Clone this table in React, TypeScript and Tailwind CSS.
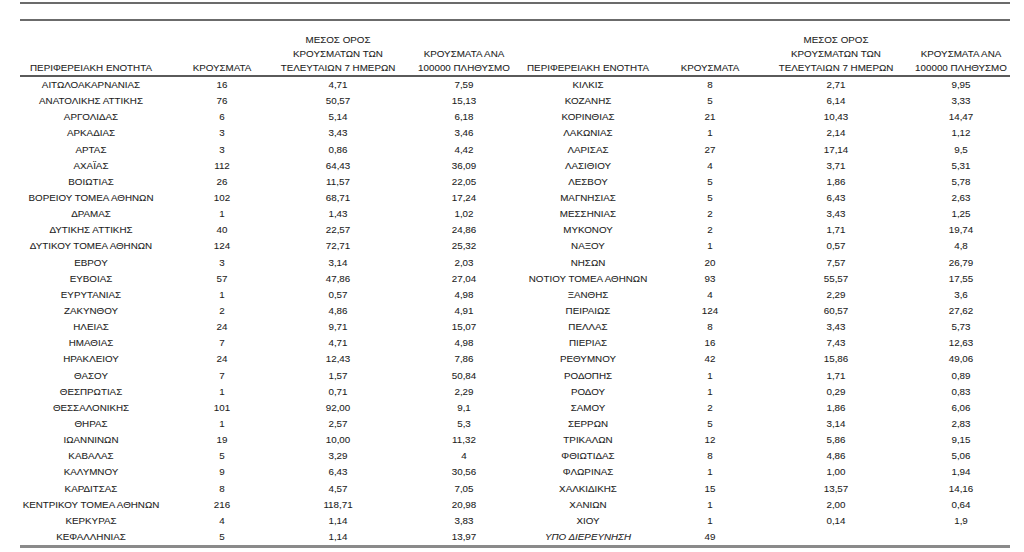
import React from "react";

type Row = [string, string, string, string];

const left: Row[] = [
  ["ΑΙΤΩΛΟΑΚΑΡΝΑΝΙΑΣ", "16", "4,71", "7,59"],
  ["ΑΝΑΤΟΛΙΚΗΣ ΑΤΤΙΚΗΣ", "76", "50,57", "15,13"],
  ["ΑΡΓΟΛΙΔΑΣ", "6", "5,14", "6,18"],
  ["ΑΡΚΑΔΙΑΣ", "3", "3,43", "3,46"],
  ["ΑΡΤΑΣ", "3", "0,86", "4,42"],
  ["ΑΧΑΪΑΣ", "112", "64,43", "36,09"],
  ["ΒΟΙΩΤΙΑΣ", "26", "11,57", "22,05"],
  ["ΒΟΡΕΙΟΥ ΤΟΜΕΑ ΑΘΗΝΩΝ", "102", "68,71", "17,24"],
  ["ΔΡΑΜΑΣ", "1", "1,43", "1,02"],
  ["ΔΥΤΙΚΗΣ ΑΤΤΙΚΗΣ", "40", "22,57", "24,86"],
  ["ΔΥΤΙΚΟΥ ΤΟΜΕΑ ΑΘΗΝΩΝ", "124", "72,71", "25,32"],
  ["ΕΒΡΟΥ", "3", "3,14", "2,03"],
  ["ΕΥΒΟΙΑΣ", "57", "47,86", "27,04"],
  ["ΕΥΡΥΤΑΝΙΑΣ", "1", "0,57", "4,98"],
  ["ΖΑΚΥΝΘΟΥ", "2", "4,86", "4,91"],
  ["ΗΛΕΙΑΣ", "24", "9,71", "15,07"],
  ["ΗΜΑΘΙΑΣ", "7", "4,71", "4,98"],
  ["ΗΡΑΚΛΕΙΟΥ", "24", "12,43", "7,86"],
  ["ΘΑΣΟΥ", "7", "1,57", "50,84"],
  ["ΘΕΣΠΡΩΤΙΑΣ", "1", "0,71", "2,29"],
  ["ΘΕΣΣΑΛΟΝΙΚΗΣ", "101", "92,00", "9,1"],
  ["ΘΗΡΑΣ", "1", "2,57", "5,3"],
  ["ΙΩΑΝΝΙΝΩΝ", "19", "10,00", "11,32"],
  ["ΚΑΒΑΛΑΣ", "5", "3,29", "4"],
  ["ΚΑΛΥΜΝΟΥ", "9", "6,43", "30,56"],
  ["ΚΑΡΔΙΤΣΑΣ", "8", "4,57", "7,05"],
  ["ΚΕΝΤΡΙΚΟΥ ΤΟΜΕΑ ΑΘΗΝΩΝ", "216", "118,71", "20,98"],
  ["ΚΕΡΚΥΡΑΣ", "4", "1,14", "3,83"],
  ["ΚΕΦΑΛΛΗΝΙΑΣ", "5", "1,14", "13,97"],
];

const right: Row[] = [
  ["ΚΙΛΚΙΣ", "8", "2,71", "9,95"],
  ["ΚΟΖΑΝΗΣ", "5", "6,14", "3,33"],
  ["ΚΟΡΙΝΘΙΑΣ", "21", "10,43", "14,47"],
  ["ΛΑΚΩΝΙΑΣ", "1", "2,14", "1,12"],
  ["ΛΑΡΙΣΑΣ", "27", "17,14", "9,5"],
  ["ΛΑΣΙΘΙΟΥ", "4", "3,71", "5,31"],
  ["ΛΕΣΒΟΥ", "5", "1,86", "5,78"],
  ["ΜΑΓΝΗΣΙΑΣ", "5", "6,43", "2,63"],
  ["ΜΕΣΣΗΝΙΑΣ", "2", "3,43", "1,25"],
  ["ΜΥΚΟΝΟΥ", "2", "1,71", "19,74"],
  ["ΝΑΞΟΥ", "1", "0,57", "4,8"],
  ["ΝΗΣΩΝ", "20", "7,57", "26,79"],
  ["ΝΟΤΙΟΥ ΤΟΜΕΑ ΑΘΗΝΩΝ", "93", "55,57", "17,55"],
  ["ΞΑΝΘΗΣ", "4", "2,29", "3,6"],
  ["ΠΕΙΡΑΙΩΣ", "124", "60,57", "27,62"],
  ["ΠΕΛΛΑΣ", "8", "3,43", "5,73"],
  ["ΠΙΕΡΙΑΣ", "16", "7,43", "12,63"],
  ["ΡΕΘΥΜΝΟΥ", "42", "15,86", "49,06"],
  ["ΡΟΔΟΠΗΣ", "1", "1,71", "0,89"],
  ["ΡΟΔΟΥ", "1", "0,29", "0,83"],
  ["ΣΑΜΟΥ", "2", "1,86", "6,06"],
  ["ΣΕΡΡΩΝ", "5", "3,14", "2,83"],
  ["ΤΡΙΚΑΛΩΝ", "12", "5,86", "9,15"],
  ["ΦΘΙΩΤΙΔΑΣ", "8", "4,86", "5,06"],
  ["ΦΛΩΡΙΝΑΣ", "1", "1,00", "1,94"],
  ["ΧΑΛΚΙΔΙΚΗΣ", "15", "13,57", "14,16"],
  ["ΧΑΝΙΩΝ", "1", "2,00", "0,64"],
  ["ΧΙΟΥ", "1", "0,14", "1,9"],
  ["ΥΠΟ ΔΙΕΡΕΥΝΗΣΗ", "49", "", ""],
];

const gridCols =
  "grid grid-cols-[142px_120px_112px_140px_108px_136px_116px_116px]";

function HeadCell({ lines, last }: { lines: string[]; last?: boolean }) {
  return (
    <div
      className={
        "flex flex-col items-center justify-end leading-[14px] " +
        (last ? "pl-[18px]" : "")
      }
    >
      {lines.map((l, i) => (
        <div key={i} className="whitespace-nowrap">
          {l}
        </div>
      ))}
    </div>
  );
}

function Cell({
  text,
  last,
  italic,
}: {
  text: string;
  last?: boolean;
  italic?: boolean;
}) {
  return (
    <div
      className={
        "flex justify-center whitespace-nowrap " +
        (last ? "pl-[18px] " : "") +
        (italic ? "italic" : "")
      }
    >
      {text}
    </div>
  );
}

export default function App() {
  const headGroup = (suffix: boolean) => [
    <HeadCell key="a" lines={["ΠΕΡΙΦΕΡΕΙΑΚΗ ΕΝΟΤΗΤΑ"]} />,
    <HeadCell key="b" lines={["ΚΡΟΥΣΜΑΤΑ"]} />,
    <HeadCell
      key="c"
      lines={["ΜΕΣΟΣ ΟΡΟΣ", "ΚΡΟΥΣΜΑΤΩΝ ΤΩΝ", "ΤΕΛΕΥΤΑΙΩΝ 7 ΗΜΕΡΩΝ"]}
    />,
    <HeadCell key="d" lines={["ΚΡΟΥΣΜΑΤΑ ΑΝΑ", "100000 ΠΛΗΘΥΣΜΟ"]} last={suffix} />,
  ];

  return (
    <div
      className="w-[1024px] h-[552px] overflow-hidden bg-white text-[#1a1a1a] text-[9.8px] [-webkit-text-stroke:0.08px_#333]"
      style={{ fontFamily: '"Liberation Sans", Arial, sans-serif' }}
    >
      <div className="ml-[20px] w-[990px] pt-[2px] flex flex-col">
        <div className="h-[2px] bg-[#6b6b6b]" />
        <div className="h-[15px]" />
        <div className="h-[2px] bg-[#6b6b6b]" />
        <div className={gridCols + " h-[54px]"}>
          {headGroup(false)}
          {headGroup(true)}
        </div>
        <div className="h-[2px] bg-[#5a5a5a]" />
        <div className={gridCols + " auto-rows-[16.15px] leading-[16.15px]"}>
          {left.map((l, i) => {
            const r = right[i];
            const isLast = i === left.length - 1;
            return (
              <React.Fragment key={i}>
                <Cell text={l[0]} />
                <Cell text={l[1]} />
                <Cell text={l[2]} />
                <Cell text={l[3]} />
                <Cell text={r[0]} italic={isLast} />
                <Cell text={r[1]} />
                <Cell text={r[2]} />
                <Cell text={r[3]} last />
              </React.Fragment>
            );
          })}
        </div>
        <div className="h-[3px] bg-[#8a8a8a]" />
      </div>
    </div>
  );
}
